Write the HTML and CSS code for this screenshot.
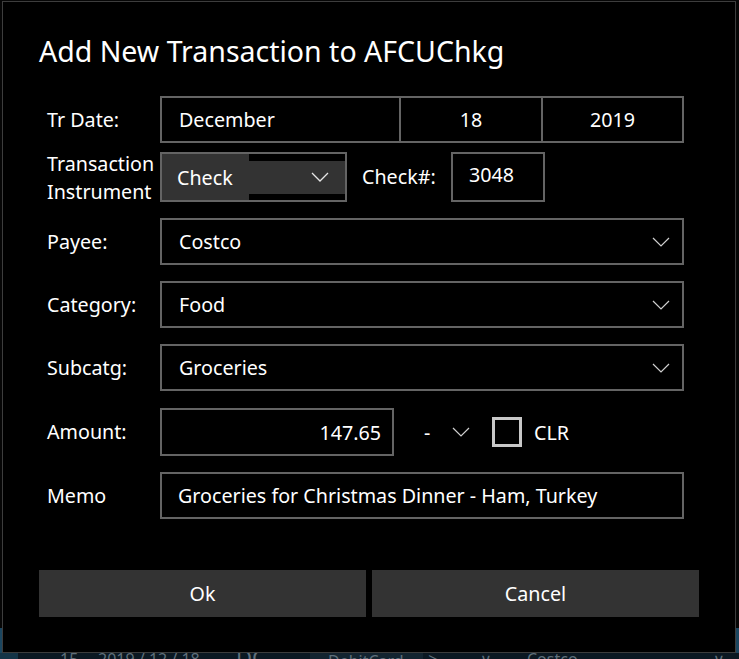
FILE: index.html
```html
<!DOCTYPE html>
<html>
<head>
<meta charset="utf-8">
<link rel="stylesheet" href="styles.css">
</head>
<body>
<div class="screen">
  <div class="topmark"></div>
  <div class="dialog">
    <h1 class="title">Add New Transaction to AFCUChkg</h1>

    <div class="row row-date">
      <div class="label">Tr Date:</div>
      <div class="datepicker">
        <div class="dp-cell dp-month">December</div>
        <div class="dp-cell dp-day">18</div>
        <div class="dp-cell dp-year">2019</div>
      </div>
    </div>

    <div class="row row-instr">
      <div class="label label-2">Transaction<br>Instrument</div>
      <div class="combo-check">
        <span>Check</span>
        <svg class="chev" width="18" height="10" viewBox="0 0 18 10"><polyline points="1,1 9,9 17,1" fill="none" stroke="#e6e6e6" stroke-width="1.3"/></svg>
      </div>
      <div class="label-check">Check#:</div>
      <div class="checknum">3048</div>
    </div>

    <div class="row row-field">
      <div class="label">Payee:</div>
      <div class="combo-wide">
        <span>Costco</span>
        <svg class="chev" width="18" height="10" viewBox="0 0 18 10"><polyline points="1,1 9,9 17,1" fill="none" stroke="#cfcfcf" stroke-width="1.2"/></svg>
      </div>
    </div>

    <div class="row row-field">
      <div class="label">Category:</div>
      <div class="combo-wide">
        <span>Food</span>
        <svg class="chev" width="18" height="10" viewBox="0 0 18 10"><polyline points="1,1 9,9 17,1" fill="none" stroke="#cfcfcf" stroke-width="1.2"/></svg>
      </div>
    </div>

    <div class="row row-field">
      <div class="label">Subcatg:</div>
      <div class="combo-wide">
        <span>Groceries</span>
        <svg class="chev" width="18" height="10" viewBox="0 0 18 10"><polyline points="1,1 9,9 17,1" fill="none" stroke="#cfcfcf" stroke-width="1.2"/></svg>
      </div>
    </div>

    <div class="row row-amount">
      <div class="label">Amount:</div>
      <div class="amount">147.65</div>
      <div class="sign">-</div>
      <svg class="chev chev-sign" width="18" height="10" viewBox="0 0 18 10"><polyline points="1,1 9,9 17,1" fill="none" stroke="#cfcfcf" stroke-width="1.2"/></svg>
      <div class="checkbox"></div>
      <div class="clr">CLR</div>
    </div>

    <div class="row row-memo">
      <div class="label">Memo</div>
      <div class="memo">Groceries for Christmas Dinner - Ham, Turkey</div>
    </div>

    <div class="buttons">
      <div class="btn">Ok</div>
      <div class="btn">Cancel</div>
    </div>
  </div>
  <div class="underlay">
    <span class="u-cell u-a"></span>
    <span class="u-text u1">15</span>
    <span class="u-text u2">2019 / 12 / 18</span>
    <span class="u-text u3">DC</span>
    <span class="u-text u4">DebitCard</span>
    <span class="u-text u5">-&gt;</span>
    <span class="u-text u6">∨</span>
    <span class="u-text u7">Costco</span>
    <span class="u-text u8">∨</span>
  </div>
</div>
</body>
</html>
```

FILE: styles.css
```css
html, body {
  margin: 0;
  padding: 0;
}
body {
  background: #060606;
  width: 739px;
  height: 659px;
  overflow: hidden;
  font-family: "Noto Sans", "Open Sans", sans-serif;
  color: #fff;
  font-size: 19.7px;
}
.screen {
  position: relative;
  width: 739px;
  height: 659px;
  overflow: hidden;
  background: linear-gradient(#060606, #060606) 0 0 / 739px 628px no-repeat, #1b4660;
}
.topmark {
  position: absolute;
  left: 217px;
  top: 1px;
  width: 95px;
  height: 2px;
  background: #575757;
}
.dialog {
  box-sizing: border-box;
  margin: 1px 0 0 2px;
  width: 734px;
  height: 652px;
  border: 1px solid #3d3d3d;
  background: #000;
  padding: 31px 36px 0 36px;
  position: relative;
  z-index: 1;
}
.title {
  margin: 0;
  font-size: 28.5px;
  font-weight: 400;
  line-height: 36px;
  height: 36px;
  white-space: nowrap;
}
.row {
  display: flex;
  align-items: center;
  padding-left: 8px;
}
.label {
  width: 113px;
  flex: none;
  line-height: 28px;
}
.row-date {
  margin-top: 27px;
}
.datepicker {
  box-sizing: border-box;
  width: 524px;
  height: 47px;
  border: 2px solid #646464;
  display: flex;
}
.dp-cell {
  display: flex;
  align-items: center;
  box-sizing: border-box;
}
.dp-month {
  width: 237px;
  padding-left: 17px;
}
.dp-day {
  width: 142px;
  border-left: 2px solid #646464;
  justify-content: center;
}
.dp-year {
  flex: 1;
  border-left: 2px solid #646464;
  justify-content: center;
}
.row-instr {
  margin-top: 7px;
  align-items: flex-start;
}
.label-2 {
  line-height: 28px;
}
.combo-check {
  box-sizing: border-box;
  margin-top: 2px;
  width: 187px;
  height: 50px;
  border: 2px solid #646464;
  background:
    linear-gradient(#000, #000) right top / 96px 7px no-repeat,
    linear-gradient(#000, #000) right bottom / 96px 6px no-repeat,
    #333;
  display: flex;
  align-items: center;
  justify-content: space-between;
  padding: 0 16px 0 15px;
}
.label-check {
  margin-top: 2px;
  margin-left: 15px;
  width: 89px;
  height: 50px;
  line-height: 50px;
}
.checknum {
  box-sizing: border-box;
  margin-top: 2px;
  width: 94px;
  height: 50px;
  border: 2px solid #646464;
  display: flex;
  align-items: center;
  padding: 0 0 5px 16px;
}
.row-field {
  margin-top: 12px;
  height: 47px;
}
.row-field + .row-field {
  margin-top: 16px;
}
.combo-wide {
  box-sizing: border-box;
  width: 524px;
  height: 47px;
  border: 2px solid #646464;
  display: flex;
  align-items: center;
  justify-content: space-between;
  padding: 0 12px 0 17px;
}
.chev {
  display: block;
  flex: none;
}
.row-amount {
  margin-top: 17px;
  height: 48px;
}
.amount {
  box-sizing: border-box;
  width: 234px;
  height: 48px;
  border: 2px solid #646464;
  display: flex;
  align-items: center;
  justify-content: flex-end;
  padding-right: 11px;
}
.sign {
  margin-left: 30px;
  width: 28px;
}
.chev-sign {
  margin-right: 22px;
}
.checkbox {
  box-sizing: border-box;
  width: 30px;
  height: 30px;
  border: 3px solid #c8c8c8;
}
.clr {
  margin-left: 12px;
}
.row-memo {
  margin-top: 16px;
  height: 47px;
}
.memo {
  box-sizing: border-box;
  width: 524px;
  height: 47px;
  border: 2px solid #646464;
  display: flex;
  align-items: center;
  padding-left: 16px;
  white-space: nowrap;
}
.buttons {
  display: flex;
  gap: 6px;
  margin-top: 51px;
}
.btn {
  width: 327px;
  height: 47px;
  background: #333;
  display: flex;
  align-items: center;
  justify-content: center;
}
.underlay {
  display: flex;
  height: 6px;
  background: #0b1822;
  color: #5f6f7b;
  font-size: 16px;
  line-height: 16px;
}
.u-cell {
  flex: none;
}
.u-a {
  width: 18px;
  background: #143447;
}
.u-text {
  flex: none;
  display: block;
  white-space: nowrap;
  margin-top: -2px;
  box-sizing: border-box;
  overflow: visible;
}
.u1 { width: 80px; padding-left: 42px; }
.u2 { width: 138px; }
.u3 { width: 74px; font-size: 22px; margin-top: -4px; }
.u4 { width: 113px; padding-left: 18px; background: #132430; margin-top: 0; height: 6px; }
.u5 { width: 57px; }
.u6 { width: 47px; }
.u7 { width: 186px; }
.u8 { width: 20px; }
```
